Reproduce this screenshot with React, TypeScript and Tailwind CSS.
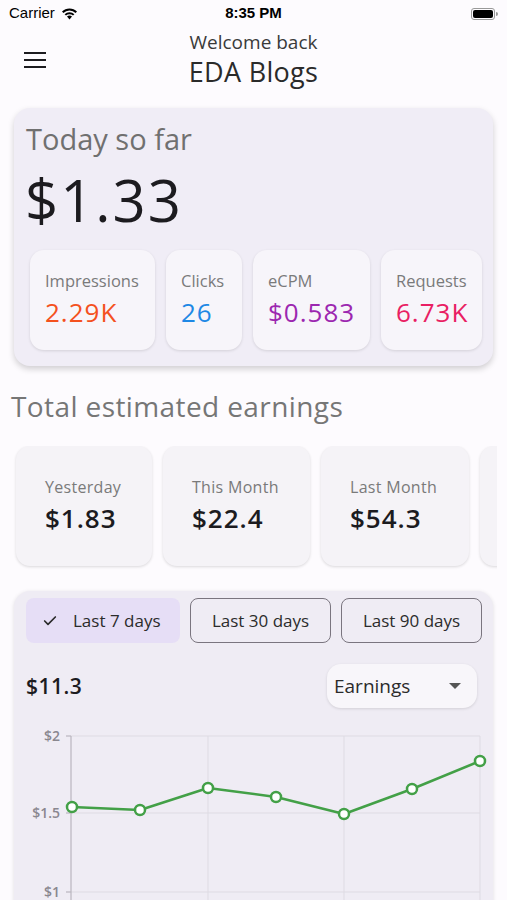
import { Check } from "lucide-react";

const stats = [
  { label: "Impressions", value: "2.29K", color: "text-[#f4511e]", width: "w-[125px]" },
  { label: "Clicks", value: "26", color: "text-[#1e88e5]", width: "w-[76px]" },
  { label: "eCPM", value: "$0.583", color: "text-[#9c27b0]", width: "w-[117px]" },
  { label: "Requests", value: "6.73K", color: "text-[#e91e63]", width: "w-[101px]" },
];

const totals = [
  { label: "Yesterday", value: "$1.83", width: "w-[136px]" },
  { label: "This Month", value: "$22.4", width: "w-[147px]" },
  { label: "Last Month", value: "$54.3", width: "w-[148px]" },
];

// chart points in svg-local coords
const points = [
  [58, 87],
  [126, 90],
  [194, 68],
  [262, 77],
  [330, 94],
  [398, 69],
  [466, 41],
];

function StatusBar() {
  return (
    <div className="flex h-[27px] items-center justify-between px-[9px] font-['Liberation_Sans',sans-serif] text-[15px] text-black">
      <div className="flex items-center gap-[6px]">
        <span>Carrier</span>
        <svg width="17" height="13" viewBox="0 0 17 13">
          <path d="M8.5 12.5 L6 9.6 A3.6 3.6 0 0 1 11 9.6 Z" fill="#000" />
          <path d="M3.6 7.2 A7 7 0 0 1 13.4 7.2 L12 8.6 A5 5 0 0 0 5 8.6 Z" fill="#000" />
          <path d="M1 4.6 A10.6 10.6 0 0 1 16 4.6 L14.6 6 A8.6 8.6 0 0 0 2.4 6 Z" fill="#000" />
        </svg>
      </div>
      <span className="absolute left-1/2 -translate-x-1/2 font-bold">8:35 PM</span>
      <div className="flex items-center">
        <div className="h-[12px] w-[24px] rounded-[3px] border border-[#999] p-[1px]">
          <div className="h-full w-full rounded-[2px] bg-black" />
        </div>
        <div className="ml-[1px] h-[4px] w-[2px] rounded-r-sm bg-[#999]" />
      </div>
    </div>
  );
}

export default function App() {
  return (
    <div className="relative h-[900px] w-full overflow-hidden bg-[#fdfbfe] font-['Open_Sans',sans-serif] text-[#1c1b1f]">
      <StatusBar />

      <header className="relative flex h-[81px] flex-col items-center pt-[3px]">
        <button className="absolute left-[24px] top-[25px] flex flex-col gap-[5px]">
          <span className="block h-[2px] w-[22px] bg-[#1c1b1f]" />
          <span className="block h-[2px] w-[22px] bg-[#1c1b1f]" />
          <span className="block h-[2px] w-[22px] bg-[#1c1b1f]" />
        </button>
        <p className="text-[19px] leading-[24px] text-[#3a3a3a]">Welcome back</p>
        <h1 className="text-[27px] leading-[36px] tracking-[0.3px] text-[#2a2a2a]">EDA Blogs</h1>
      </header>

      <section className="mx-[14px] rounded-[16px] bg-[#f0edf6] pb-[16px] pt-[13px] shadow-[0_3px_6px_rgba(0,0,0,0.18)]">
        <p className="px-[12px] text-[29px] leading-[36px] text-[#707070]">Today so far</p>
        <p className="mt-[11px] px-[11px] text-[58px] leading-[64px] tracking-[2px] text-[#1c1b1f]">$1.33</p>
        <div className="mt-[18px] flex gap-[11px] pl-[16px] pr-[11px]">
          {stats.map((s) => (
            <div
              key={s.label}
              className={`${s.width} h-[100px] rounded-[14px] bg-[#f7f5fa] px-[15px] pt-[20px] shadow-[0_1px_3px_rgba(0,0,0,0.12)]`}
            >
              <p className="text-[16.5px] leading-[22px] text-[#7a7a7a]">{s.label}</p>
              <p className={`mt-[4px] text-[26px] font-medium leading-[32px] tracking-[1px] ${s.color}`}>{s.value}</p>
            </div>
          ))}
        </div>
      </section>

      <h2 className="mt-[23px] px-[11px] text-[28px] leading-[34px] tracking-[0.4px] text-[#767676]">
        Total estimated earnings
      </h2>

      <div className="mr-[10px] mt-[23px] flex gap-[11px] overflow-hidden pb-[4px] pl-[16px]">
        {totals.map((t) => (
          <div
            key={t.label}
            className={`${t.width} h-[120px] shrink-0 rounded-[14px] bg-[#f5f3f7] pl-[29px] pt-[31px] shadow-[0_1px_3px_rgba(0,0,0,0.14)]`}
          >
            <p className="text-[16px] leading-[20px] tracking-[0.3px] text-[#7a7a7a]">{t.label}</p>
            <p className="mt-[5px] text-[26px] font-semibold leading-[32px] tracking-[1px] text-[#1c1b1f]">{t.value}</p>
          </div>
        ))}
        <div className="h-[120px] w-[140px] shrink-0 rounded-[14px] bg-[#f5f3f7] shadow-[0_1px_3px_rgba(0,0,0,0.14)]" />
      </div>

      <section className="mx-[14px] mt-[21px] h-[320px] rounded-t-[16px] bg-[#efecf4] pt-[7px] shadow-[0_1px_4px_rgba(0,0,0,0.12)]">
        <div className="flex gap-[10px] pl-[12px] pr-[10px]">
          <button className="flex h-[45px] w-[154px] items-center gap-[15px] rounded-[8px] bg-[#e6def6] pl-[16px] text-[17px] text-[#2b2b2b]">
            <Check size={16} strokeWidth={2.5} />
            Last 7 days
          </button>
          <button className="h-[45px] w-[141px] rounded-[8px] border border-[#7a757f] text-[17px] text-[#2b2b2b]">
            Last 30 days
          </button>
          <button className="h-[45px] w-[141px] rounded-[8px] border border-[#7a757f] text-[17px] text-[#2b2b2b]">
            Last 90 days
          </button>
        </div>

        <div className="mt-[21px] flex items-center justify-between pl-[12px] pr-[16px]">
          <p className="text-[21px] font-semibold leading-[26px] tracking-[0.5px] text-[#1c1b1f]">$11.3</p>
          <div className="flex h-[44px] w-[150px] items-center justify-between rounded-[14px] bg-[#f8f6fa] pl-[7px] pr-[16px] shadow-[0_1px_3px_rgba(0,0,0,0.12)]">
            <span className="text-[19px] text-[#2b2b2b]">Earnings</span>
            <svg width="12" height="6" viewBox="0 0 12 6">
              <path d="M0 0 L12 0 L6 6 Z" fill="#555" />
            </svg>
          </div>
        </div>

        <svg width="479" height="200" viewBox="0 0 479 200" className="mt-[12px]">
          {[16, 93, 172].map((y) => (
            <line key={y} x1="57" x2="466" y1={y} y2={y} stroke="#dedbe3" strokeWidth="1" />
          ))}
          {[194, 330, 466].map((x) => (
            <line key={x} x1={x} x2={x} y1="16" y2="200" stroke="#dedbe3" strokeWidth="1" />
          ))}
          <line x1="57" x2="57" y1="16" y2="200" stroke="#b9b6be" strokeWidth="1.2" />
          {[16, 93, 172].map((y) => (
            <line key={`t${y}`} x1="52" x2="57" y1={y} y2={y} stroke="#b9b6be" strokeWidth="1.2" />
          ))}
          <g fontFamily="Open Sans, sans-serif" fontSize="14" fontWeight="600" fill="#8a878f" textAnchor="end">
            <text x="46" y="21">$2</text>
            <text x="46" y="98">$1.5</text>
            <text x="46" y="177">$1</text>
          </g>
          <polyline
            points={points.map((p) => p.join(",")).join(" ")}
            fill="none"
            stroke="#43a047"
            strokeWidth="2.5"
            strokeLinejoin="round"
          />
          {points.map(([x, y]) => (
            <circle key={x} cx={x} cy={y} r="5" fill="#fff" stroke="#43a047" strokeWidth="2.5" />
          ))}
        </svg>
      </section>
    </div>
  );
}
